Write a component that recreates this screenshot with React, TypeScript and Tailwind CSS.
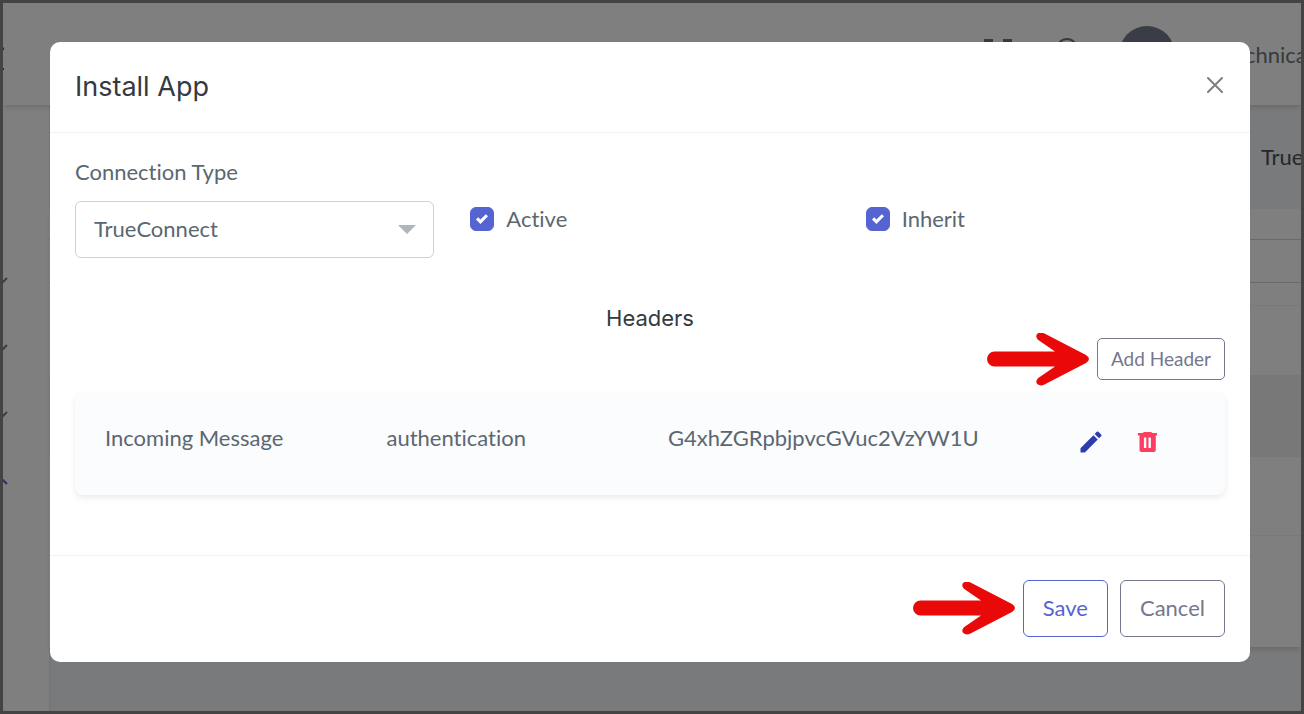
import { useState } from 'react';
import { MdEdit } from 'react-icons/md';

interface HeaderRow {
  type: string;
  name: string;
  value: string;
}

const HEADER_ROWS: HeaderRow[] = [
  { type: 'Incoming Message', name: 'authentication', value: 'G4xhZGRpbjpvcGVuc2VzYW1U' },
];

function PointerArrow() {
  return (
    <svg viewBox="0 0 102 53" className="-my-1.5 h-[53px] w-[102px] shrink-0" fill="#ea0909" aria-hidden="true">
      <path d="M7.500 18.500H68L52 7.500C46 3 51-2.300 57 .300L99 22Q105 26 99 30L57 51.700C51 54.300 46 49 52 44.500L68 33.500H7.500A7.500 7.500 0 0 1 7.500 18.500Z" />
    </svg>
  );
}

function TrashIcon() {
  return (
    <svg viewBox="0 0 28 28" className="h-7 w-7" fill="#ff3d60" aria-hidden="true">
      <path
        fillRule="evenodd"
        d="M5 5h4.500L11 4h7l1.500 1H24V7.500h-1.200v14.500q0 2-2 2H8.500q-2 0-2-2V7.500H5zM10.900 9.500v10.500h2.400v-10.500zM15.500 9.500v10.500h2.400v-10.500z"
      />
    </svg>
  );
}

function Checkbox({ id, label }: { id: string; label: string }) {
  const [checked, setChecked] = useState(true);

  return (
    <div className="flex items-start gap-3 pt-12">
      <span className="relative mt-0.5 flex h-6 w-6 shrink-0">
        <input
          id={id}
          type="checkbox"
          checked={checked}
          onChange={e => setChecked(e.target.checked)}
          className="h-6 w-6 appearance-none rounded-md border border-[#d4d7e1] bg-white checked:border-[#5664d2] checked:bg-[#5664d2]"
        />
        {checked && (
          <svg viewBox="0 0 8 8" className="pointer-events-none absolute top-1.5 left-1.5 h-3 w-3" fill="#fff" aria-hidden="true">
            <path d="M6.564.75l-3.590 3.612-1.538-1.550L0 4.260 2.974 7.250 8 2.193z" />
          </svg>
        )}
      </span>
      <label htmlFor={id} className="text-[22px] leading-7 text-[#5b6771]">{label}</label>
    </div>
  );
}

function Background() {
  return (
    <div className="absolute inset-0 flex flex-col overflow-hidden bg-[#f3f5f7]" aria-hidden="true">
      {/* Topbar */}
      <div className="z-10 flex h-[102px] shrink-0 items-center justify-end bg-white shadow-md">
        <svg viewBox="0 0 4 32" className="mr-auto h-8 w-1" fill="#4b5563">
          <path d="M0 9l1 1v2H0zM0 30h1v4l-1 1z" />
        </svg>
        <svg viewBox="0 0 32 32" className="mr-10 h-8 w-8" fill="#6c757d">
          <path d="M1 1h9v9H1zM20 1h9v9h-9zM1 20h9v9H1zM20 20h9v9h-9z" />
        </svg>
        <svg viewBox="0 0 24 32" className="mr-10 h-8 w-6" fill="none" stroke="#6c757d" strokeWidth="2">
          <circle cx="12" cy="11" r="10" />
          <path d="M19 18l5 6" />
        </svg>
        <div className="mr-12 h-14 w-14 rounded-full bg-[#74788d]" />
        <span className="w-[78px] overflow-hidden text-[22px] whitespace-nowrap text-[#6c757d]">Technical</span>
      </div>
      <div className="flex min-h-0 flex-1">
        {/* Sidebar */}
        <div className="flex w-[46px] shrink-0 flex-col gap-[59px] bg-white pt-[171px] shadow-sm">
          {[0, 1, 2, 3].map(i => (
            <svg key={i} viewBox="0 0 5 8" className="h-2 w-[5px]" fill="none" stroke={i === 3 ? '#5664d2' : '#74788d'} strokeWidth="2">
              <path d={i === 3 ? 'M-1 2L4 7' : 'M-1 7L4 2'} />
            </svg>
          ))}
        </div>
        <div className="flex min-w-0 flex-1 flex-col">
          <div className="flex h-[104px] shrink-0 items-center justify-end pb-0.5 text-[22px] text-[#495057]">
            <span className="w-10 overflow-hidden">TrueConnect</span>
          </div>
          <div className="h-[438px] shrink-0 bg-white shadow-md">
            <div className="h-[31px] border-b border-[#ced4da]" />
            <div className="h-[43px] border-b border-[#ced4da]" />
            <div className="h-[23px] border-b border-[#eff2f7]" />
            <div className="h-[69px]" />
            <div className="h-[82px] bg-[#f1f1f2]" />
            <div className="h-[79px] border-b border-[#eff2f7]" />
          </div>
        </div>
      </div>
    </div>
  );
}

export default function App() {
  const [connection, setConnection] = useState('TrueConnect');

  return (
    <div className="relative min-h-screen border-3 border-[#444] font-[Lato,sans-serif] [font-variant-ligatures:none]">
      <Background />
      <div className="absolute inset-0 z-20 bg-black/50" />

      <div
        role="dialog"
        aria-modal="true"
        aria-labelledby="install-title"
        className="relative z-30 mt-[39px] mr-[51px] ml-[47px] rounded-[10px] bg-white"
      >
        <div className="flex h-[91px] items-center justify-between border-b border-[#eff2f7] px-[25px]">
          <h1 id="install-title" className="font-[Inter,sans-serif] text-[27px] text-[#343a40]">Install App</h1>
          <button aria-label="Close" className="mb-1 p-0.5">
            <svg viewBox="0 0 16 16" className="h-4 w-4" fill="none" stroke="#7f7f7f" strokeWidth="2" strokeLinecap="round">
              <path d="M1 1L15 15M15 1L1 15" />
            </svg>
          </button>
        </div>

        <div className="px-[25px] pt-6 pb-15">
          <div className="grid grid-cols-3 gap-9">
            <div>
              <label htmlFor="connection" className="mb-3.5 block text-[22px] leading-[30px] text-[#5b6771]">Connection Type</label>
              <div className="relative">
                <select
                  id="connection"
                  value={connection}
                  onChange={e => setConnection(e.target.value)}
                  className="h-[57px] w-full appearance-none rounded-md border border-[#ced0da] bg-white px-[18px] pb-0.5 text-[22px] text-[#5b6771]"
                >
                  <option>TrueConnect</option>
                </select>
                <svg viewBox="0 0 18 9" className="pointer-events-none absolute top-6 right-[18px] h-[9px] w-[18px]" fill="#adb5bd" aria-hidden="true">
                  <path d="M0 0h18L9 9z" />
                </svg>
              </div>
            </div>
            <Checkbox id="active" label="Active" />
            <Checkbox id="inherit" label="Inherit" />
          </div>

          <h2 className="mt-11 mb-1 text-center font-[Inter,sans-serif] text-[22px] leading-8 text-[#343a40]">Headers</h2>
          <div className="flex items-center justify-end gap-2">
            <PointerArrow />
            <button className="h-[42px] rounded-[5px] border border-[#74788d] px-[13px] text-[19px] text-[#74788d]">Add Header</button>
          </div>

          <div className="mt-3 rounded-lg bg-[#fbfcfe] px-3 shadow-[0_3px_6px_rgba(0,0,0,0.08)]">
            <table className="w-full table-fixed text-left text-[22px] text-[#5b6771]">
              <tbody>
                {HEADER_ROWS.map(row => (
                  <tr key={row.name} className="h-[103px]">
                    <td className="px-[18px] pb-3">{row.type}</td>
                    <td className="px-[18px] pb-3">{row.name}</td>
                    <td className="px-[18px] pb-3">{row.value}</td>
                    <td className="pr-[52px] pb-1">
                      <div className="flex justify-end gap-7">
                        <button aria-label="Edit header"><MdEdit size={28} color="#2f3cb0" /></button>
                        <button aria-label="Delete header"><TrashIcon /></button>
                      </div>
                    </td>
                  </tr>
                ))}
              </tbody>
            </table>
          </div>
        </div>

        <div className="flex items-center justify-end gap-3 border-t border-[#f1f1f3] px-[25px] pt-6 pb-[25px]">
          <div className="flex items-center gap-2">
            <PointerArrow />
            <button className="h-[57px] rounded-md border border-[#5664d2] px-[19px] pb-0.5 text-[22px] text-[#5664d2]">Save</button>
          </div>
          <button className="h-[57px] rounded-md border border-[#74788d] px-[19px] pb-0.5 text-[22px] text-[#74788d]">Cancel</button>
        </div>
      </div>
    </div>
  );
}
